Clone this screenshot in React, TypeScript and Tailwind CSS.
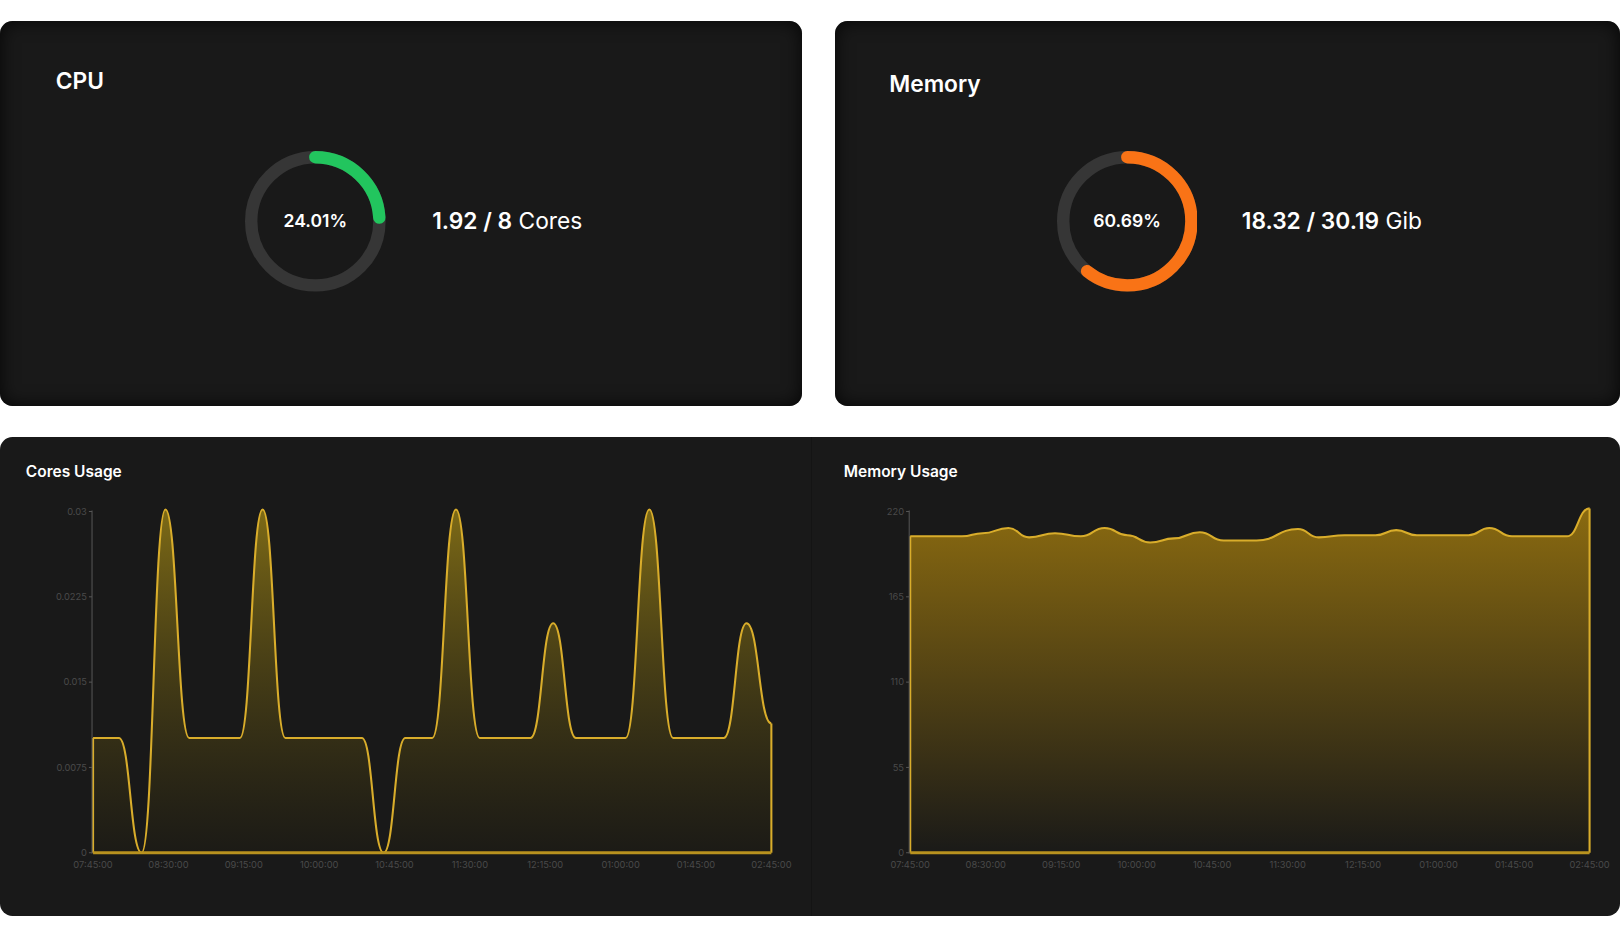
import React from "react";

type P = [number, number];
function path(pts: P[]) {
  let d = `M${pts[0][0]},${pts[0][1]}`;
  for (let i = 1; i < pts.length; i++) {
    const [x0, y0] = pts[i - 1];
    const [x1, y1] = pts[i];
    const dx = (x1 - x0) / 2;
    d += ` C${x0 + dx},${y0} ${x1 - dx},${y1} ${x1},${y1}`;
  }
  return d;
}

const coresPts: P[] = [[90,714],[115,714],[137,825],[160,493],[183,714],[232,714],[254,493],[276,714],[350,714],[371,825],[392,714],[418,714],[441,493],[464,714],[513,714],[535,603],[557,714],[605,714],[628,493],[651,714],[700,714],[722,603],[746,700]];
const memPts: P[] = [[880,519],[930,519],[950,516],[975,511],[995,520],[1020,516],[1045,519],[1068,511],[1090,518],[1112,525],[1135,521],[1160,515],[1183,523],[1215,523],[1255,512],[1275,520],[1300,518],[1330,518],[1350,513],[1370,518],[1420,518],[1440,511],[1462,519],[1515,519],[1537,492]];

function Chart({ pts, x0, x1, yLabels, offX, gid, top, bottom, xLabels }: { pts: P[]; x0: number; x1: number; yLabels: string[]; offX: number; gid: string; top: string; bottom: string; xLabels: string[] }) {
  const line = path(pts);
  return (
    <svg width={785} height={390} className="block">
      <defs>
        <linearGradient id={gid} x1="0" y1="0" x2="0" y2="1">
          <stop offset="0%" stopColor={top} />
          <stop offset="100%" stopColor={bottom} />
        </linearGradient>
      </defs>
      <g transform={`translate(${-offX},-480)`}>
        <path d={`M${x0},825 L${x0},${pts[0][1]} ${line.slice(line.indexOf("C"))} L${x1},825 Z`} fill={`url(#${gid})`} />
        <path d={line} fill="none" stroke="#d9ad2b" strokeWidth={2} />
        <line x1={x0} y1={pts[0][1]} x2={x0} y2={825} stroke="#d9ad2b" strokeWidth={2} />
        <line x1={x1} y1={pts[pts.length - 1][1]} x2={x1} y2={825} stroke="#d9ad2b" strokeWidth={2} />
        <line x1={x0 - 1} y1={494} x2={x0 - 1} y2={826} stroke="#555" strokeWidth={1} />
        <line x1={x0} y1={825} x2={x1} y2={825} stroke="#b8921f" strokeWidth={3} />
        {yLabels.map((l, i) => {
          const y = 495 + i * 82.5;
          return (
            <g key={l}>
              <line x1={x0 - 4} x2={x0 - 1} y1={y} y2={y} stroke="#555" />
              <text x={x0 - 6} y={y + 3} textAnchor="end" fontSize={9} fill="#4a4a4a" fontFamily="Inter, sans-serif">{l}</text>
            </g>
          );
        })}
        {xLabels.map((l, i) => {
          const x = x0 + (i * (x1 - x0)) / (xLabels.length - 1);
          return (
            <text key={i} x={x} y={840} textAnchor="middle" fontSize={9} fill="#4a4a4a" fontFamily="Inter, sans-serif">{l}</text>
          );
        })}
      </g>
    </svg>
  );
}

function Donut({ pct, color, label }: { pct: number; color: string; label: string }) {
  const r = 62;
  const c = 2 * Math.PI * r;
  return (
    <div className="relative w-[136px] h-[136px]">
      <svg width={136} height={136}>
        <circle cx={68} cy={68} r={r} fill="none" stroke="#363636" strokeWidth={12} />
        <circle cx={68} cy={68} r={r} fill="none" stroke={color} strokeWidth={12} strokeLinecap="round" strokeDasharray={`${(c * pct) / 100} ${c}`} transform="rotate(-90 68 68)" />
      </svg>
      <div className="absolute inset-0 flex items-center justify-center text-[17px] font-semibold text-white">{label}</div>
    </div>
  );
}

const xl = ["07:45:00","08:30:00","09:15:00","10:00:00","10:45:00","11:30:00","12:15:00","01:00:00","01:45:00","02:45:00"];

export default function App() {
  return (
    <div className="bg-white w-[1567px] h-[906px] pt-[20px] [zoom:1.034]" style={{ fontFamily: "Inter, 'Noto Sans', sans-serif" }}>
      <div className="flex gap-[32px]">
        <div className="w-[776px] h-[373px] rounded-[12px] bg-[#191919] shadow-[inset_0_0_18px_rgba(0,0,0,0.8)] pl-[54px] pt-[45px]">
          <div className="text-white text-[22px] font-semibold leading-[28px]">CPU</div>
          <div className="flex items-center ml-[183px] mt-[53px] gap-[45px]">
            <Donut pct={24.01} color="#22c55e" label="24.01%" />
            <div className="text-white text-[22px]"><span className="font-semibold">1.92 / 8</span> Cores</div>
          </div>
        </div>
        <div className="w-[759px] h-[373px] rounded-[12px] bg-[#191919] shadow-[inset_0_0_18px_rgba(0,0,0,0.8)] pl-[52px] pt-[48px]">
          <div className="text-white text-[22px] font-semibold leading-[28px]">Memory</div>
          <div className="flex items-center ml-[162px] mt-[50px] gap-[43px]">
            <Donut pct={60.69} color="#f97316" label="60.69%" />
            <div className="text-white text-[22px]"><span className="font-semibold">18.32 / 30.19</span> Gib</div>
          </div>
        </div>
      </div>
      <div className="mt-[30px] w-[1567px] h-[463px] rounded-[12px] bg-[#191919] flex overflow-hidden">
        <div className="w-[785px] pt-[24px] border-r border-[#141414]">
          <div className="pl-[25px] text-white text-[15px] font-semibold leading-[20px]">Cores Usage</div>
          <div className="mt-[13px]">
            <Chart pts={coresPts} x0={90} x1={746} offX={0} gid="g1" top="#7d6a16" bottom="rgba(30,28,20,0.6)" yLabels={["0.03","0.0225","0.015","0.0075","0"]} xLabels={xl} />
          </div>
        </div>
        <div className="flex-1 pt-[24px]">
          <div className="pl-[31px] text-white text-[15px] font-semibold leading-[20px]">Memory Usage</div>
          <div className="mt-[13px]">
            <Chart pts={memPts} x0={880} x1={1537} offX={785} gid="g2" top="#8a6a10" bottom="#1a1a18" yLabels={["220","165","110","55","0"]} xLabels={xl} />
          </div>
        </div>
      </div>
    </div>
  );
}
